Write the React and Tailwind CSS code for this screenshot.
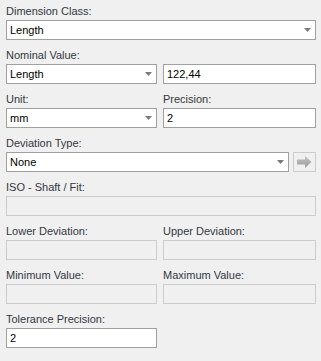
import React from "react";

const font = { fontFamily: '"Liberation Sans", Arial, sans-serif' };

function Label({ children }) {
  return <div className="h-[18px] pt-[1px] text-[11px] leading-[16px] text-[#333840] whitespace-nowrap">{children}</div>;
}

function Caret() {
  return (
    <svg width="7" height="4" viewBox="0 0 7 4" className="shrink-0">
      <polygon points="0,0 7,0 3.5,4" fill="#7a7a7a" />
    </svg>
  );
}

function Select({ value }) {
  return (
    <div className="h-[20px] border border-[#a0a0a0] bg-white flex items-center pl-[3px] pr-[4px] text-[11px] text-black">
      <span className="flex-1">{value}</span>
      <Caret />
    </div>
  );
}

function Input({ value, disabled }) {
  return (
    <div
      className={
        disabled
          ? "h-[20px] border border-[#cccccc] bg-[#f0f0f0]"
          : "h-[20px] border border-[#a0a0a0] bg-white flex items-center pl-[3px] text-[11px] text-black"
      }
    >
      {value}
    </div>
  );
}

function Field({ label, children }) {
  return (
    <div className="flex flex-col mb-[6px]">
      <Label>{label}</Label>
      {children}
    </div>
  );
}

export default function App() {
  return (
    <div className="w-[321px] h-[361px] bg-[#f0f0f0] pl-[6px] pr-[5px] pt-[2px]" style={font}>
      <Field label="Dimension Class:">
        <Select value="Length" />
      </Field>

      <div className="grid grid-cols-[151px_1fr] gap-x-[6px]">
        <Field label="Nominal Value:">
          <Select value="Length" />
        </Field>
        <Field label={"\u00a0"}>
          <Input value="122,44" />
        </Field>
        <Field label="Unit:">
          <Select value="mm" />
        </Field>
        <Field label="Precision:">
          <Input value="2" />
        </Field>
      </div>

      <Field label="Deviation Type:">
        <div className="flex gap-[4px]">
          <div className="flex-1">
            <Select value="None" />
          </div>
          <div className="w-[23px] h-[20px] border border-[#cccccc] bg-[#f0f0f0] flex items-center justify-center">
            <svg width="15" height="12" viewBox="0 0 15 12">
              <defs>
                <linearGradient id="ar" x1="0" y1="0" x2="0" y2="1">
                  <stop offset="0" stopColor="#c4c4c4" />
                  <stop offset="1" stopColor="#9a9a9a" />
                </linearGradient>
              </defs>
              <polygon points="0,3.5 8,3.5 8,0 14.5,6 8,12 8,8.5 0,8.5" fill="url(#ar)" />
            </svg>
          </div>
        </div>
      </Field>

      <Field label="ISO - Shaft / Fit:">
        <Input disabled />
      </Field>

      <div className="grid grid-cols-[151px_1fr] gap-x-[6px]">
        <Field label="Lower Deviation:">
          <Input disabled />
        </Field>
        <Field label="Upper Deviation:">
          <Input disabled />
        </Field>
        <Field label="Minimum Value:">
          <Input disabled />
        </Field>
        <Field label="Maximum Value:">
          <Input disabled />
        </Field>
        <Field label="Tolerance Precision:">
          <Input value="2" />
        </Field>
      </div>
    </div>
  );
}
